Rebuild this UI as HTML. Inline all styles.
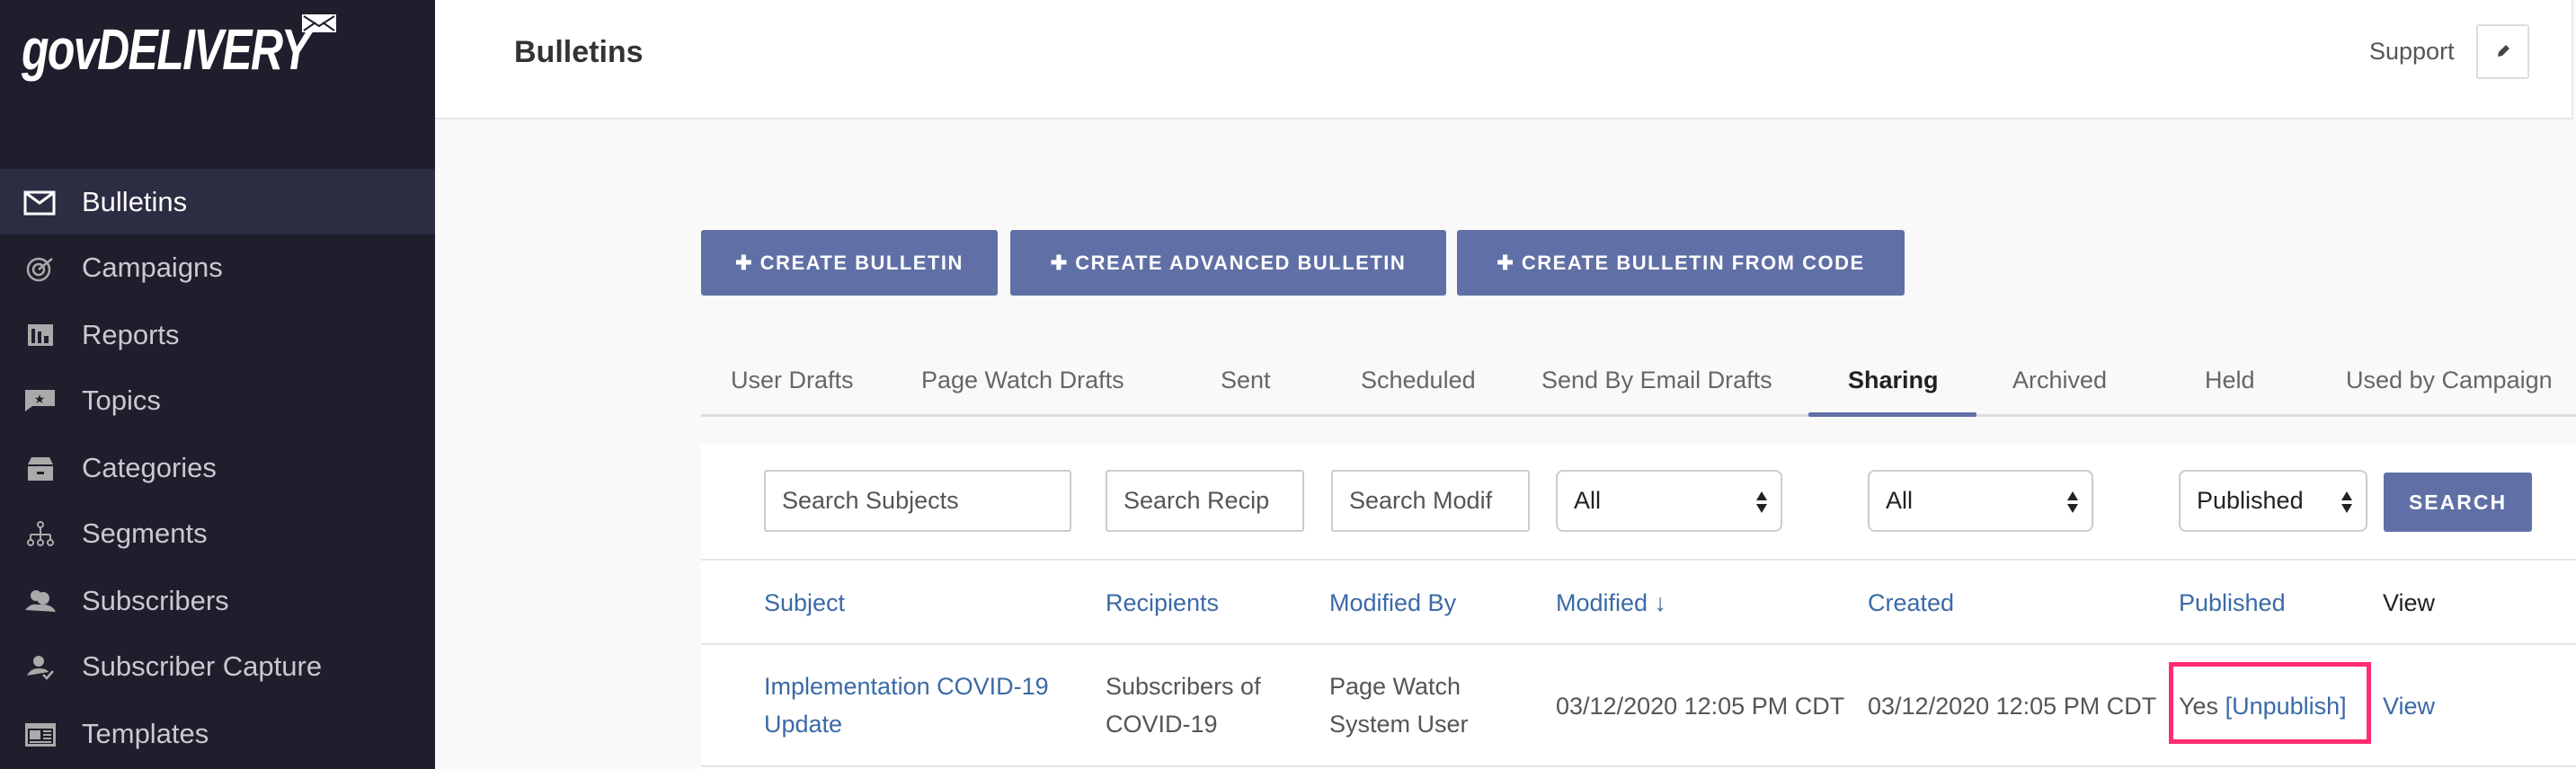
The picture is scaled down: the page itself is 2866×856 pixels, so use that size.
<!DOCTYPE html>
<html><head><meta charset="utf-8"><style>
*{margin:0;padding:0;box-sizing:border-box}
body{width:2866px;height:856px;overflow:hidden;background:#f9f9f9;font-family:"Liberation Sans",sans-serif;position:relative}
.a{position:absolute;white-space:nowrap}
#sb{position:absolute;left:0;top:0;width:484px;height:856px;background:#1f1e2c}
.nav{position:absolute;left:0;width:484px;height:72px;color:#c9c9cf;font-size:31px;line-height:72px}
.nav span{position:absolute;left:91px}
.nav svg{position:absolute;left:26px;top:18px}
.btn{position:absolute;top:256px;height:73px;background:#6070a6;border-radius:3px;color:#fff;font-weight:bold;font-size:22px;letter-spacing:1.5px;line-height:73px;text-align:center}
.tab{position:absolute;top:408px;font-size:27px;color:#666}
.inp{position:absolute;top:523px;height:69px;border:2px solid #ccc;border-radius:3px;background:#fff;font-size:27px;color:#555;line-height:65px;padding-left:18px;overflow:hidden;white-space:nowrap}
.sel{border-radius:8px;color:#222}
.arr{position:absolute;right:14px;top:20px;width:14px}
.th{position:absolute;top:656px;font-size:27px;color:#3a6aa6}
.td{position:absolute;font-size:27px;color:#555;line-height:42px}
.lk{color:#3a6aa6}
</style></head><body>
<div id="sb">
 <div class="a" style="left:24px;top:18px;font-size:64px;font-weight:bold;font-style:italic;color:#fff;letter-spacing:-2px;transform:scaleX(0.78);transform-origin:left">govDELIVERY</div>
 <svg class="a" style="left:334px;top:14px" width="42" height="32" viewBox="0 0 42 32"><path d="M2 2h38v20H14l-10 8 4-8H2z" fill="#fff"/><path d="M4 4l17 11L38 4M4 20l13-9M38 20l-13-9" stroke="#1f1e2c" stroke-width="2" fill="none"/></svg>
 <div class="nav" style="top:188px;height:73px;background:#2c2c42;color:#fff;line-height:73px"><svg width="38" height="36" viewBox="0 0 38 36"><rect x="2" y="8" width="32" height="24" fill="none" stroke="#fff" stroke-width="3"/><path d="M3 9l15 11 15-11" fill="none" stroke="#fff" stroke-width="3"/></svg><span>Bulletins</span></div>
 <div class="nav" style="top:262px"><svg width="38" height="36" viewBox="0 0 38 36"><circle cx="17" cy="20" r="12" fill="none" stroke="#aaa" stroke-width="2.5"/><circle cx="17" cy="20" r="6" fill="none" stroke="#aaa" stroke-width="2.5"/><path d="M17 20L32 8" stroke="#aaa" stroke-width="2.5"/></svg><span>Campaigns</span></div>
 <div class="nav" style="top:337px"><svg width="38" height="36" viewBox="0 0 38 36"><rect x="5" y="6" width="28" height="24" fill="#aaa"/><rect x="9" y="11" width="4" height="16" fill="#1f1e2c"/><rect x="16" y="14" width="4" height="13" fill="#1f1e2c"/><rect x="23" y="19" width="5" height="8" fill="#1f1e2c"/></svg><span>Reports</span></div>
 <div class="nav" style="top:410px"><svg width="38" height="36" viewBox="0 0 38 36"><path d="M2 6h33v18H10l-8 6z" fill="#aaa"/><text x="18" y="21" font-size="14" text-anchor="middle" fill="#1f1e2c">★</text></svg><span>Topics</span></div>
 <div class="nav" style="top:485px"><svg width="38" height="36" viewBox="0 0 38 36"><path d="M5 14l4-8h20l4 8z" fill="#aaa"/><rect x="5" y="16" width="28" height="16" fill="#aaa"/><rect x="15" y="22" width="8" height="3" fill="#1f1e2c"/></svg><span>Categories</span></div>
 <div class="nav" style="top:558px"><svg width="38" height="36" viewBox="0 0 38 36"><circle cx="19" cy="8" r="3" fill="none" stroke="#aaa" stroke-width="2"/><path d="M19 11v8M8 19h22M8 19v6M19 19v6M30 19v6" stroke="#aaa" stroke-width="2"/><circle cx="8" cy="28" r="3" fill="none" stroke="#aaa" stroke-width="2"/><circle cx="19" cy="28" r="3" fill="none" stroke="#aaa" stroke-width="2"/><circle cx="30" cy="28" r="3" fill="none" stroke="#aaa" stroke-width="2"/></svg><span>Segments</span></div>
 <div class="nav" style="top:633px"><svg width="38" height="36" viewBox="0 0 38 36"><circle cx="14" cy="12" r="6" fill="#aaa"/><circle cx="22" cy="15" r="7" fill="#aaa"/><path d="M2 28q6-8 14-6h6q10 0 14 8z" fill="#aaa"/></svg><span>Subscribers</span></div>
 <div class="nav" style="top:706px"><svg width="38" height="36" viewBox="0 0 38 36"><circle cx="17" cy="12" r="6" fill="#aaa"/><path d="M4 28q4-8 13-8q9 0 11 4z" fill="#aaa"/><path d="M22 27l4 4 7-8" stroke="#aaa" stroke-width="2.5" fill="none"/></svg><span>Subscriber Capture</span></div>
 <div class="nav" style="top:781px"><svg width="38" height="36" viewBox="0 0 38 36"><rect x="2" y="6" width="34" height="26" fill="#aaa"/><rect x="5" y="12" width="28" height="17" fill="#1f1e2c"/><rect x="7" y="14" width="12" height="10" fill="#aaa"/><path d="M22 15h9M22 19h9M22 23h9M7 27h24" stroke="#aaa" stroke-width="2"/></svg><span>Templates</span></div>
</div>
<div class="a" style="left:484px;top:0;width:2379px;height:133px;background:#fff;border-bottom:2px solid #e8e8e8;border-right:2px solid #e8e8e8"></div>
<div class="a" style="left:572px;top:39px;font-size:34px;font-weight:bold;color:#333">Bulletins</div>
<div class="a" style="left:2636px;top:42px;font-size:27px;color:#555">Support</div>
<div class="a" style="left:2755px;top:27px;width:59px;height:61px;border:2px solid #ddd;border-radius:3px;background:#fff"><svg style="position:absolute;left:19px;top:19px" width="18" height="18" viewBox="0 0 18 18"><path d="M3 15l1-5 8-8 4 4-8 8z" fill="#444"/></svg></div>

<div class="btn" style="left:780px;width:330px">✚ CREATE BULLETIN</div>
<div class="btn" style="left:1124px;width:485px">✚ CREATE ADVANCED BULLETIN</div>
<div class="btn" style="left:1621px;width:498px">✚ CREATE BULLETIN FROM CODE</div>

<div class="tab" style="left:813px">User Drafts</div>
<div class="tab" style="left:1025px">Page Watch Drafts</div>
<div class="tab" style="left:1358px">Sent</div>
<div class="tab" style="left:1514px">Scheduled</div>
<div class="tab" style="left:1715px">Send By Email Drafts</div>
<div class="tab" style="left:2056px;color:#222;font-weight:bold">Sharing</div>
<div class="tab" style="left:2239px">Archived</div>
<div class="tab" style="left:2453px">Held</div>
<div class="tab" style="left:2610px">Used by Campaign</div>
<div class="a" style="left:780px;top:461px;width:2086px;height:3px;background:#ddd"></div>
<div class="a" style="left:2012px;top:459px;width:187px;height:5px;background:#6070a6;border-radius:2px"></div>

<div class="a" style="left:780px;top:494px;width:2086px;height:362px;background:#fff"></div>
<div class="inp" style="left:850px;width:342px">Search Subjects</div>
<div class="inp" style="left:1230px;width:221px">Search Recip</div>
<div class="inp" style="left:1481px;width:221px">Search Modif</div>
<div class="inp sel" style="left:1731px;width:252px">All<svg class="arr" viewBox="0 0 14 28" height="28"><path d="M7 2l6 10H1zM7 26l6-10H1z" fill="#222"/></svg></div>
<div class="inp sel" style="left:2078px;width:251px">All<svg class="arr" viewBox="0 0 14 28" height="28"><path d="M7 2l6 10H1zM7 26l6-10H1z" fill="#222"/></svg></div>
<div class="inp sel" style="left:2424px;width:210px">Published<svg class="arr" viewBox="0 0 14 28" height="28"><path d="M7 2l6 10H1zM7 26l6-10H1z" fill="#222"/></svg></div>
<div class="a" style="left:2652px;top:526px;width:165px;height:66px;background:#6070a6;border-radius:3px;color:#fff;font-weight:bold;font-size:23px;letter-spacing:2px;text-align:center;line-height:66px">SEARCH</div>
<div class="a" style="left:780px;top:622px;width:2086px;height:2px;background:#e5e5e5"></div>
<div class="th" style="left:850px">Subject</div>
<div class="th" style="left:1230px">Recipients</div>
<div class="th" style="left:1479px">Modified By</div>
<div class="th" style="left:1731px">Modified ↓</div>
<div class="th" style="left:2078px">Created</div>
<div class="th" style="left:2424px">Published</div>
<div class="th" style="left:2651px;color:#222">View</div>
<div class="a" style="left:780px;top:716px;width:2086px;height:2px;background:#e5e5e5"></div>
<div class="td lk" style="left:850px;top:743px">Implementation COVID-19<br>Update</div>
<div class="td" style="left:1230px;top:743px">Subscribers of<br>COVID-19</div>
<div class="td" style="left:1479px;top:743px">Page Watch<br>System User</div>
<div class="td" style="left:1731px;top:765px">03/12/2020 12:05 PM CDT</div>
<div class="td" style="left:2078px;top:765px">03/12/2020 12:05 PM CDT</div>
<div class="td" style="left:2424px;top:765px">Yes <span class="lk">[Unpublish]</span></div>
<div class="td lk" style="left:2651px;top:765px">View</div>
<div class="a" style="left:2413px;top:737px;width:225px;height:91px;border:5px solid #ff2d6f"></div>
<div class="a" style="left:780px;top:852px;width:2086px;height:2px;background:#e5e5e5"></div>
</body></html>
